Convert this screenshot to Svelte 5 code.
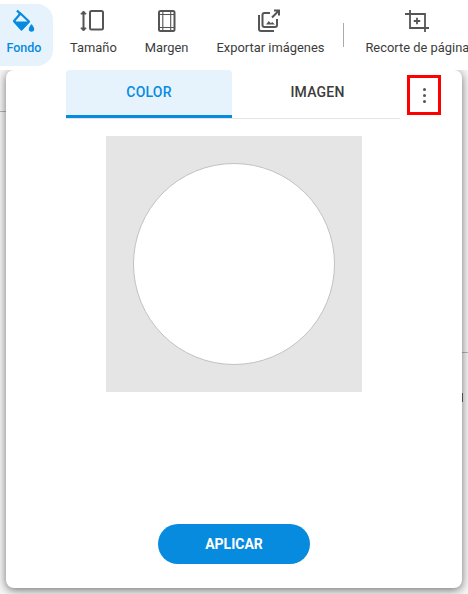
<script lang="ts">
	const tools = [
		{ label: 'Tamaño', icon: 'size' },
		{ label: 'Margen', icon: 'margin' },
		{ label: 'Exportar imágenes', icon: 'export' }
	];
</script>

<div class="page">
	<header class="toolbar">
		<button class="tool active">
			<svg viewBox="0 0 24 26" width="24" height="26" fill="#078bdf">
				<path d="M5 2.500 8.500 6" fill="none" stroke="#078bdf" stroke-width="2.400"/>
				<path d="M8.500 5.500 17 13.500 9.500 21.500 2 13z" fill="none" stroke="#078bdf" stroke-width="2.200" stroke-linejoin="round"/>
				<path d="M1 13.500h17l-8.500 9z"/>
				<path d="M19.500 16s-2.700 3-2.700 5a2.700 2.700 0 0 0 5.400 0c0-2-2.700-5-2.700-5z"/>
			</svg>
			<span>Fondo</span>
		</button>
		{#each tools as t}
			<button class="tool">
				{#if t.icon === 'size'}
					<svg viewBox="0 0 26 26" width="26" height="26" fill="none" stroke="#555" stroke-width="2">
						<rect x="10" y="3" width="13" height="18.500" rx="1.500"/>
						<path d="M3.500 4v18"/>
						<path d="M.8 6 3.500 3l2.700 3zM.8 20 3.500 23l2.700-3z" fill="#555" stroke-width="1"/>
					</svg>
				{:else if t.icon === 'margin'}
					<svg viewBox="0 0 26 26" width="26" height="26" fill="none" stroke="#555">
						<rect x="5" y="3" width="15.500" height="20" rx="1.500" stroke-width="2"/>
						<path d="M8.800 3v20M16.700 3v20M5 6.500h15.500M5 19.500h15.500" stroke-width="1.100"/>
					</svg>
				{:else}
					<svg viewBox="0 0 26 26" width="26" height="26" fill="none" stroke="#555" stroke-width="2">
						<path d="M2 7v14a2 2 0 0 0 2 2h13"/>
						<path d="M13 5H7.500a2 2 0 0 0-2 2v10a2 2 0 0 0 2 2H18a2 2 0 0 0 2-2v-6"/>
						<path d="M15 9.500 21.500 3M17 2.500h5v5"/>
						<path d="M9 16.500l2.800-3.500 2 2.300 1.400-1.300 2.800 2.500z" fill="#555" stroke="none"/>
					</svg>
				{/if}
				<span>{t.label}</span>
			</button>
		{/each}
		<div class="divider"></div>
		<button class="tool crop">
			<svg viewBox="0 0 26 26" width="26" height="26" fill="none" stroke="#555" stroke-width="1.800">
				<path d="M1 6h20v18M6 2v18h19"/>
				<path d="M9.800 13h6.400M13 9.800v6.400"/>
			</svg>
			<span>Recorte de página</span>
		</button>
	</header>

	<main class="backdrop">
		<span class="rule left"></span>
		<span class="rule right"></span>
		<span class="fragment"></span>

		<section class="panel">
			<div class="tab-row">
				<div class="tabs">
					<button class="tab selected">COLOR</button>
					<button class="tab">IMAGEN</button>
				</div>
				<button class="more" aria-label="Más opciones">
					<i></i><i></i><i></i>
				</button>
			</div>

			<div class="preview">
				<div class="circle"></div>
			</div>

			<button class="apply">APLICAR</button>
		</section>
	</main>
</div>

<style>
	:global(body) {
		margin: 0;
		background: #fff;
	}

	.page {
		width: 468px;
		height: 594px;
		overflow: hidden;
		display: flex;
		flex-direction: column;
		font-family: Roboto, "Liberation Sans", sans-serif;
	}

	button {
		font: inherit;
		border: 0;
		background: none;
		padding: 0;
		cursor: pointer;
	}

	.toolbar {
		height: 70px;
		flex-shrink: 0;
		display: flex;
		align-items: flex-start;
		background: #fff;
		white-space: nowrap;
		position: relative;
		z-index: 1;
	}

	.tool {
		height: 62px;
		margin-top: 4px;
		display: flex;
		flex-direction: column;
		align-items: center;
		flex-shrink: 0;
		color: #3c3c3c;
		font-size: 12.9px;
		margin-left: 28px;
	}

	.tool svg {
		margin-top: 4px;
		display: block;
	}

	.tool span {
		margin-top: 6px;
		line-height: 16px;
	}

	.tool.active {
		width: 53px;
		margin-left: 0;
		padding-right: 5px;
		box-sizing: border-box;
		border-radius: 0 16px 16px 0;
		background: #e6f3fd;
		color: #078bdf;
		font-size: 12.5px;
		font-weight: 500;
	}

	.tool.active + .tool {
		margin-left: 17px;
	}

	.divider {
		width: 1px;
		height: 24px;
		margin: 23px 0 0 19px;
		background: #aaa;
		flex-shrink: 0;
	}

	.tool.crop {
		margin-left: 21px;
	}

	.backdrop {
		position: relative;
		flex: 1;
		min-height: 0;
		padding: 0 6px 6px;
		background: #f6f6f6;
		display: flex;
	}

	.rule {
		position: absolute;
		height: 1px;
		width: 6px;
		background: #b5b5b5;
	}

	.rule.left {
		left: 0;
		top: 41px;
	}

	.rule.right {
		right: 0;
		top: 282px;
	}

	.fragment {
		position: absolute;
		right: 5px;
		top: 323px;
		width: 1px;
		height: 9px;
		background: #666;
	}

	.panel {
		position: relative;
		flex: 1;
		display: flex;
		flex-direction: column;
		align-items: center;
		background: #fff;
		border-radius: 8px;
		box-shadow: 0 2px 10px rgba(0, 0, 0, 0.55);
	}

	.tab-row {
		align-self: stretch;
		display: flex;
		align-items: flex-start;
		padding-left: 60px;
	}

	.tabs {
		width: 334px;
		height: 49px;
		display: flex;
		border-bottom: 1px solid #e4e4e4;
		box-sizing: border-box;
	}

	.tab {
		height: 48px;
		box-sizing: border-box;
		width: 166px;
		color: #3c3c3c;
		font-size: 14px;
		font-weight: 500;
		letter-spacing: 0.2px;
		padding-bottom: 4px;
	}

	.tab + .tab {
		width: 168px;
		padding-left: 3px;
	}

	.tab.selected {
		color: #078bdf;
		background: #e6f3fd;
		border-bottom: 3px solid #078bdf;
		border-radius: 4px 4px 0 0;
		padding-bottom: 1px;
	}

	.more {
		width: 34px;
		height: 40px;
		box-sizing: border-box;
		margin: 5px 0 0 7px;
		border: 3px solid #f00;
		display: flex;
		flex-direction: column;
		align-items: center;
		justify-content: center;
		gap: 3px;
	}

	.more i {
		width: 3px;
		height: 3px;
		border-radius: 50%;
		background: #555;
	}

	.preview {
		width: 256px;
		height: 256px;
		margin-top: 17px;
		background: #e5e5e5;
		display: flex;
		align-items: center;
		justify-content: center;
	}

	.circle {
		width: 202px;
		height: 202px;
		box-sizing: border-box;
		border: 1px solid #c2c2c2;
		border-radius: 50%;
		background: #fff;
	}

	.apply {
		width: 152px;
		height: 40px;
		margin-top: 132px;
		border-radius: 20px;
		background: #078bdf;
		color: #fff;
		font-size: 14px;
		font-weight: 700;
	}
</style>
